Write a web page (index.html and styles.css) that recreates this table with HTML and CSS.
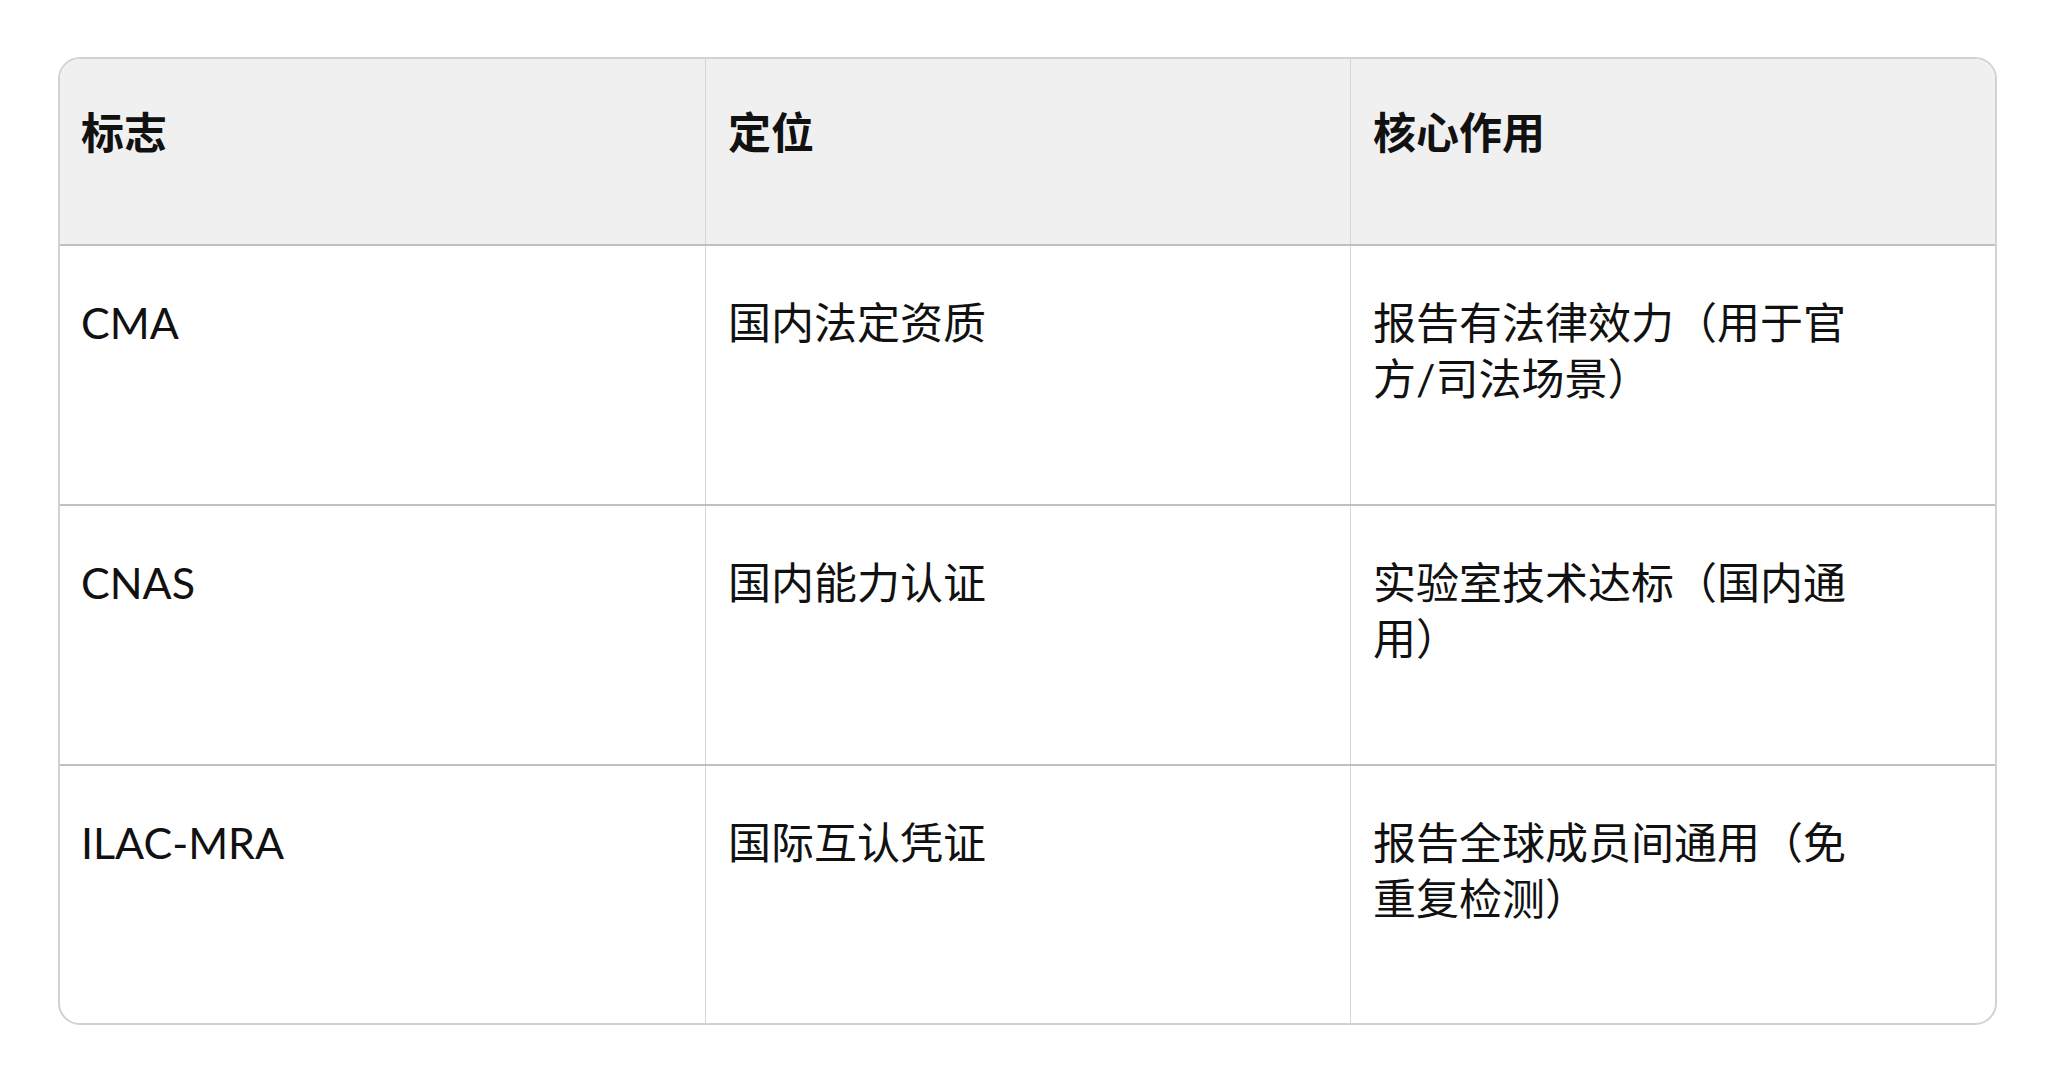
FILE: index.html
```html
<!DOCTYPE html>
<html lang="zh-CN">
<head>
<meta charset="utf-8">
<link rel="stylesheet" href="styles.css">
</head>
<body>
<div class="table">
  <div class="row head">
    <div class="cell">标志</div>
    <div class="cell">定位</div>
    <div class="cell">核心作用</div>
  </div>
  <div class="row">
    <div class="cell">CMA</div>
    <div class="cell">国内法定资质</div>
    <div class="cell"><span class="txt">报告有法律效力（用于官方/司法场景）</span></div>
  </div>
  <div class="row">
    <div class="cell">CNAS</div>
    <div class="cell">国内能力认证</div>
    <div class="cell"><span class="txt">实验室技术达标（国内通用）</span></div>
  </div>
  <div class="row last">
    <div class="cell">ILAC-MRA</div>
    <div class="cell">国际互认凭证</div>
    <div class="cell"><span class="txt">报告全球成员间通用（免重复检测）</span></div>
  </div>
</div>
</body>
</html>
```

FILE: styles.css
```css
html, body {
  margin: 0;
  padding: 0;
  background: #ffffff;
}
body {
  padding: 57px 56px 0 58px;
  font-family: Lato, "Noto Sans CJK SC", sans-serif;
  color: #111111;
}
.table {
  border: 2px solid #d2d2d2;
  border-radius: 22px;
  overflow: hidden;
  background: #ffffff;
}
.row {
  display: grid;
  grid-template-columns: 1fr 1fr 1fr;
  height: 258px;
  border-top: 2px solid #c0c0c0;
  box-sizing: content-box;
}
.row.head {
  border-top: none;
  height: 185px;
  background: #f0f0f0;
  font-weight: 700;
}
.row.last {
  height: 257px;
}
.cell {
  padding: 47px 22px 0 22px;
  font-size: 43px;
  line-height: 56px;
  border-left: 1px solid #d6d6d6;
}
.cell:first-child {
  border-left: none;
  padding-left: 21px;
}
.row .cell { padding-top: 49px; }
.row.head .cell { padding-top: 46px; }
.txt {
  display: block;
  max-width: 495px;
}
```
